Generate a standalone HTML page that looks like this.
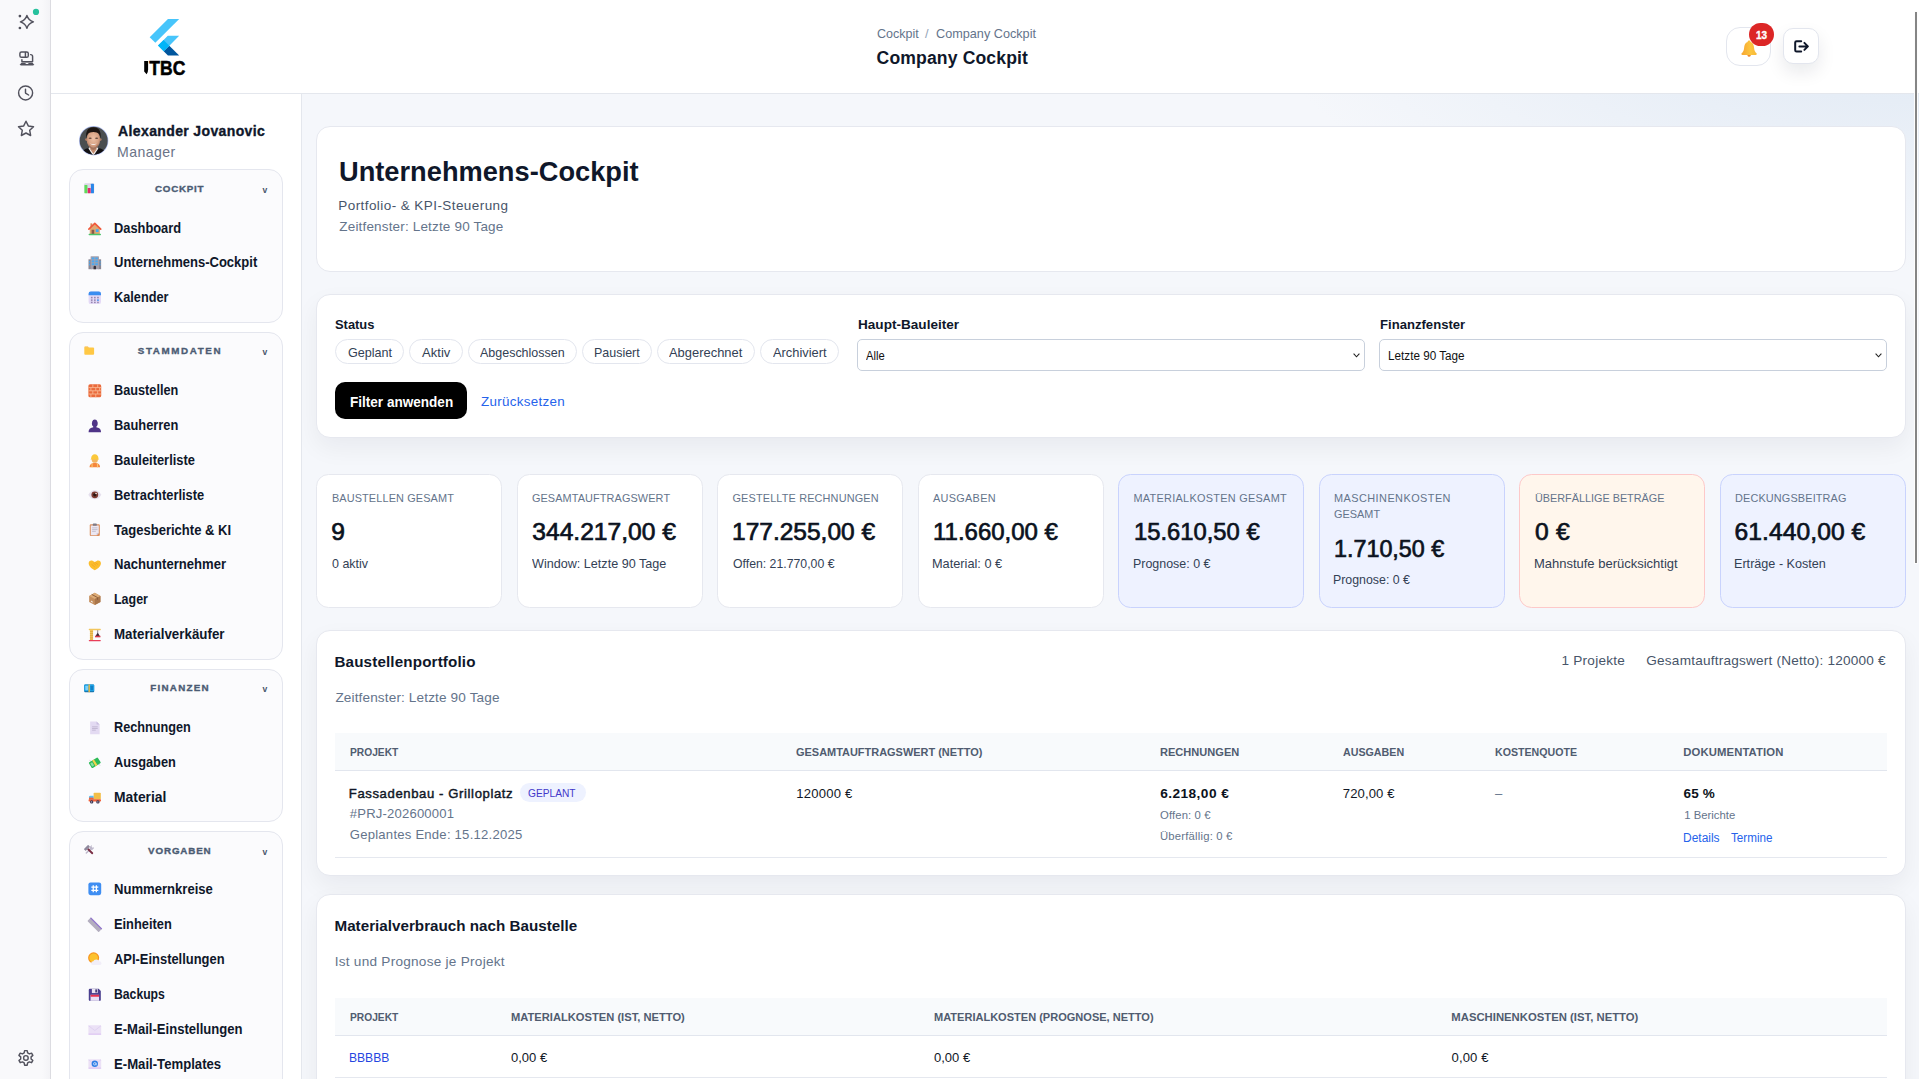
<!DOCTYPE html>
<html lang="de"><head><meta charset="utf-8"><title>Company Cockpit</title>
<style>
*{box-sizing:border-box;margin:0;padding:0}
html,body{width:1919px;height:1079px;overflow:hidden}
body{position:relative;background:#f5f7fb;font-family:"Liberation Sans",Arial,sans-serif;color:#0f172a}
.t{position:absolute;transform-origin:0 50%;white-space:nowrap;line-height:20px;height:20px;font-weight:400;text-decoration:none;display:block}
h1.t,h2.t{margin:0}
.b{position:absolute}
.rail{background:linear-gradient(90deg,#f9f9fb 0,#f9f9fb 84%,#f3f3f6 100%);border-right:1px solid #dcdce1}
.hdr{background:#fff;border-bottom:1px solid #e4e7ed}
.side{background:#fff;border-right:1px solid #e4e7ed}
.glow{background:radial-gradient(ellipse 660px 270px at 1617px -94px,#dde7f3 0,rgba(245,247,251,0) 100%)}
.grp{border:1px solid #e4e6ee;border-radius:14px;background:#fbfbfd}
.card{background:#fff;border:1px solid #e6e8ef;border-radius:14px}
.sh{box-shadow:0 10px 24px rgba(15,23,42,.055)}
.k{background:#fff;border:1px solid #e6e8ef;border-radius:12.5px}
.ki{background:#eef2ff;border-color:#c9d3fd}
.ko{background:#fff6ec;border-color:#fdc9c9}
.chip{border:1px solid #e3e6ee;border-radius:13px;background:#fff}
.sel{border:1px solid #c8d0dc;border-radius:5px;background:#fff}
.btnb{background:#000;border-radius:10px;border:0}
.th{background:#f8fafc;border-bottom:1px solid #e2e6ee}
.ln{background:#e5e8ef;height:1px}
.pill{background:#eef2ff;border-radius:10px}
.ib{background:#fff;border:1px solid #e3e6ee}
svg{position:absolute;overflow:visible}
</style></head>
<body>
<main>
<div class="b glow" style="left:302.00px;top:94.00px;width:1617.00px;height:426.00px;"></div>
<section><div class="b card" style="left:316.00px;top:126.00px;width:1590.00px;height:146.00px;"></div><h1 class="t" style="left:339.03px;top:161px;font-size:28.2px;font-weight:700;transform:scaleX(0.9660);color:#0f172a;">Unternehmens-Cockpit</h1>
<div class="t" style="left:338.30px;top:196px;font-size:13.5px;letter-spacing:0.425px;color:#475569;">Portfolio- &amp; KPI-Steuerung</div>
<div class="t" style="left:339.30px;top:217px;font-size:13.5px;letter-spacing:0.168px;color:#64748b;">Zeitfenster: Letzte 90 Tage</div></section>
<section><div class="b card sh" style="left:316.00px;top:294.00px;width:1590.00px;height:144.00px;"></div>
<label class="t" style="left:335.30px;top:315px;font-size:13.6px;font-weight:700;transform:scaleX(0.9491);color:#0f172a;">Status</label>
<span class="b chip" style="left:335px;top:339px;width:69px;height:25px;"><span class="t" style="left:11.50px;top:3px;font-size:13px;transform:scaleX(0.9691);color:#334155;">Geplant</span></span>
<span class="b chip" style="left:409px;top:339px;width:54px;height:25px;"><span class="t" style="left:12.00px;top:3px;font-size:13px;letter-spacing:0.032px;color:#334155;">Aktiv</span></span>
<span class="b chip" style="left:468px;top:339px;width:109px;height:25px;"><span class="t" style="left:11.30px;top:3px;font-size:13px;transform:scaleX(0.9598);color:#334155;">Abgeschlossen</span></span>
<span class="b chip" style="left:582px;top:339px;width:70px;height:25px;"><span class="t" style="left:10.64px;top:3px;font-size:13px;transform:scaleX(0.9580);color:#334155;">Pausiert</span></span>
<span class="b chip" style="left:657px;top:339px;width:98px;height:25px;"><span class="t" style="left:11.20px;top:3px;font-size:13px;transform:scaleX(0.9945);color:#334155;">Abgerechnet</span></span>
<span class="b chip" style="left:760px;top:339px;width:79px;height:25px;"><span class="t" style="left:11.70px;top:3px;font-size:13px;transform:scaleX(0.9878);color:#334155;">Archiviert</span></span>
<label class="t" style="left:857.60px;top:315px;font-size:13.6px;font-weight:700;transform:scaleX(0.9988);color:#0f172a;">Haupt-Bauleiter</label>
<label class="t" style="left:1379.70px;top:315px;font-size:13.6px;font-weight:700;transform:scaleX(0.9643);color:#0f172a;">Finanzfenster</label>
<div class="b sel" style="left:857px;top:339px;width:508px;height:32px;"><span class="t" style="left:8.20px;top:6px;font-size:12.3px;transform:scaleX(0.9097);color:#111;">Alle</span><svg style="left:494.70px;top:13.00px" width="7.00" height="5.00" viewBox="0 0 7 5" ><path d="M.6.7 3.5 3.8 6.4.7" fill="none" stroke="#222" stroke-width="1.1"/></svg></div>
<div class="b sel" style="left:1379px;top:339px;width:508px;height:32px;"><span class="t" style="left:8.05px;top:6px;font-size:12.3px;transform:scaleX(0.9520);color:#111;">Letzte 90 Tage</span><svg style="left:494.90px;top:13.00px" width="7.00" height="5.00" viewBox="0 0 7 5" ><path d="M.6.7 3.5 3.8 6.4.7" fill="none" stroke="#222" stroke-width="1.1"/></svg></div>
<button class="b btnb" style="left:335px;top:382px;width:132px;height:37px;"><span class="t" style="left:14.80px;top:10px;font-size:13.9px;font-weight:700;transform:scaleX(0.9757);color:#fff;">Filter anwenden</span></button>
<a href="#" class="t" style="left:481.00px;top:392px;font-size:13.4px;letter-spacing:0.297px;color:#2563eb;">Zurücksetzen</a></section>
<section><article><div class="b k" style="left:316.00px;top:474.00px;width:186.00px;height:134.00px;"></div><div class="t" style="left:331.90px;top:488px;font-size:10.9px;letter-spacing:0.133px;color:#64748b;">BAUSTELLEN GESAMT</div><div class="t" style="left:331.20px;top:522px;font-size:24.6px;color:#0b1220;-webkit-text-stroke:0.7px #0b1220;">9</div><div class="t" style="left:332.20px;top:554px;font-size:13px;transform:scaleX(0.9600);color:#334155;">0 aktiv</div></article>
<article><div class="b k" style="left:517.00px;top:474.00px;width:186.00px;height:134.00px;"></div><div class="t" style="left:531.90px;top:488px;font-size:10.9px;letter-spacing:0.107px;color:#64748b;">GESAMTAUFTRAGSWERT</div><div class="t" style="left:532.30px;top:522px;font-size:24.6px;color:#0b1220;-webkit-text-stroke:0.7px #0b1220;">344.217,00 €</div><div class="t" style="left:532.00px;top:554px;font-size:13px;transform:scaleX(0.9692);color:#334155;">Window: Letzte 90 Tage</div></article>
<article><div class="b k" style="left:717.00px;top:474.00px;width:186.00px;height:134.00px;"></div><div class="t" style="left:732.50px;top:488px;font-size:10.9px;letter-spacing:0.150px;color:#64748b;">GESTELLTE RECHNUNGEN</div><div class="t" style="left:732.20px;top:522px;font-size:24.6px;transform:scaleX(0.9963);color:#0b1220;-webkit-text-stroke:0.7px #0b1220;">177.255,00 €</div><div class="t" style="left:732.80px;top:554px;font-size:13px;transform:scaleX(0.9443);color:#334155;">Offen: 21.770,00 €</div></article>
<article><div class="b k" style="left:918.00px;top:474.00px;width:186.00px;height:134.00px;"></div><div class="t" style="left:932.90px;top:488px;font-size:10.9px;letter-spacing:0.321px;color:#64748b;">AUSGABEN</div><div class="t" style="left:933.02px;top:522px;font-size:24.6px;transform:scaleX(0.9755);color:#0b1220;-webkit-text-stroke:0.7px #0b1220;">11.660,00 €</div><div class="t" style="left:932.22px;top:554px;font-size:13px;transform:scaleX(0.9803);color:#334155;">Material: 0 €</div></article>
<article><div class="b k ki" style="left:1118.00px;top:474.00px;width:186.00px;height:134.00px;"></div><div class="t" style="left:1133.50px;top:488px;font-size:10.9px;letter-spacing:0.285px;color:#64748b;">MATERIALKOSTEN GESAMT</div><div class="t" style="left:1133.63px;top:522px;font-size:24.6px;transform:scaleX(0.9672);color:#0b1220;-webkit-text-stroke:0.7px #0b1220;">15.610,50 €</div><div class="t" style="left:1132.84px;top:554px;font-size:13px;transform:scaleX(0.9564);color:#334155;">Prognose: 0 €</div></article>
<article><div class="b k ki" style="left:1319.00px;top:474.00px;width:186.00px;height:134.00px;"></div><div class="t" style="left:1334.00px;top:488px;font-size:10.9px;letter-spacing:0.453px;color:#64748b;">MASCHINENKOSTEN</div><div class="t" style="left:1334.00px;top:504px;font-size:10.9px;letter-spacing:0.013px;color:#64748b;">GESAMT</div><div class="t" style="left:1334.25px;top:539px;font-size:24.6px;transform:scaleX(0.9484);color:#0b1220;-webkit-text-stroke:0.7px #0b1220;">1.710,50 €</div><div class="t" style="left:1333.35px;top:570px;font-size:13px;transform:scaleX(0.9503);color:#334155;">Prognose: 0 €</div></article>
<article><div class="b k ko" style="left:1519.00px;top:474.00px;width:186.00px;height:134.00px;"></div><div class="t" style="left:1534.60px;top:488px;font-size:10.9px;transform:scaleX(0.9946);color:#64748b;">ÜBERFÄLLIGE BETRÄGE</div><div class="t" style="left:1535.00px;top:522px;font-size:24.6px;letter-spacing:0.245px;color:#0b1220;-webkit-text-stroke:0.7px #0b1220;">0 €</div><div class="t" style="left:1533.90px;top:554px;font-size:13px;color:#334155;">Mahnstufe berücksichtigt</div></article>
<article><div class="b k ki" style="left:1720.00px;top:474.00px;width:186.00px;height:134.00px;"></div><div class="t" style="left:1735.00px;top:488px;font-size:10.9px;letter-spacing:0.139px;color:#64748b;">DECKUNGSBEITRAG</div><div class="t" style="left:1734.60px;top:522px;font-size:24.6px;letter-spacing:0.076px;color:#0b1220;-webkit-text-stroke:0.7px #0b1220;">61.440,00 €</div><div class="t" style="left:1734.33px;top:554px;font-size:13px;transform:scaleX(0.9708);color:#334155;">Erträge - Kosten</div></article></section>
<section><div class="b card sh" style="left:316.00px;top:630.00px;width:1590.00px;height:246.00px;"></div>
<h2 class="t" style="left:334.50px;top:652px;font-size:15.2px;font-weight:700;letter-spacing:0.144px;color:#0f172a;">Baustellenportfolio</h2>
<div class="t" style="left:335.40px;top:688px;font-size:13.6px;letter-spacing:0.131px;color:#64748b;">Zeitfenster: Letzte 90 Tage</div>
<span class="t" style="left:1561.50px;top:651px;font-size:13.6px;letter-spacing:0.228px;color:#475569;">1 Projekte</span>
<span class="t" style="left:1646.30px;top:651px;font-size:13.6px;letter-spacing:0.211px;color:#475569;">Gesamtauftragswert (Netto): 120000 €</span>
<div class="b th" style="left:335.00px;top:733.00px;width:1551.80px;height:38.00px;"></div>
<div class="t" style="left:349.70px;top:742px;font-size:11.3px;font-weight:700;transform:scaleX(0.9054);color:#505c70;">PROJEKT</div>
<div class="t" style="left:796.00px;top:742px;font-size:11.3px;font-weight:700;transform:scaleX(0.9695);color:#505c70;">GESAMTAUFTRAGSWERT (NETTO)</div>
<div class="t" style="left:1159.90px;top:742px;font-size:11.3px;font-weight:700;transform:scaleX(0.9789);color:#505c70;">RECHNUNGEN</div>
<div class="t" style="left:1342.50px;top:742px;font-size:11.3px;font-weight:700;transform:scaleX(0.9459);color:#505c70;">AUSGABEN</div>
<div class="t" style="left:1494.90px;top:742px;font-size:11.3px;font-weight:700;transform:scaleX(0.9395);color:#505c70;">KOSTENQUOTE</div>
<div class="t" style="left:1683.30px;top:742px;font-size:11.3px;font-weight:700;letter-spacing:0.111px;color:#505c70;">DOKUMENTATION</div>
<span class="b pill" style="left:520px;top:783px;width:66px;height:19px;"><span class="t" style="left:8.40px;top:0px;font-size:10.9px;transform:scaleX(0.9348);color:#4338ca;">GEPLANT</span></span>
<span class="t" style="left:348.80px;top:784px;font-size:13.1px;letter-spacing:0.610px;color:#111827;-webkit-text-stroke:0.45px #111827;">Fassadenbau - Grilloplatz</span>
<span class="t" style="left:349.80px;top:804px;font-size:13.1px;letter-spacing:0.178px;color:#64748b;">#PRJ-202600001</span>
<span class="t" style="left:349.80px;top:825px;font-size:13.1px;letter-spacing:0.227px;color:#64748b;">Geplantes Ende: 15.12.2025</span>
<span class="t" style="left:796.20px;top:784px;font-size:13.1px;letter-spacing:0.210px;color:#111827;">120000 €</span>
<span class="t" style="left:1160.20px;top:784px;font-size:13.7px;font-weight:700;letter-spacing:0.435px;color:#0b1220;">6.218,00 €</span>
<span class="t" style="left:1160.00px;top:805px;font-size:11.3px;letter-spacing:0.125px;color:#64748b;">Offen: 0 €</span>
<span class="t" style="left:1160.00px;top:826px;font-size:11.3px;letter-spacing:0.192px;color:#64748b;">Überfällig: 0 €</span>
<span class="t" style="left:1342.80px;top:784px;font-size:13.1px;letter-spacing:0.102px;color:#111827;">720,00 €</span>
<span class="t" style="left:1494.90px;top:784px;font-size:13.1px;color:#64748b;">–</span>
<span class="t" style="left:1683.50px;top:784px;font-size:13.5px;font-weight:700;letter-spacing:0.178px;color:#0b1220;">65 %</span>
<span class="t" style="left:1684.20px;top:805px;font-size:11.3px;letter-spacing:0.024px;color:#64748b;">1 Berichte</span>
<a href="#" class="t" style="left:1682.64px;top:828px;font-size:12.5px;transform:scaleX(0.9578);color:#2563eb;">Details</a>
<a href="#" class="t" style="left:1730.60px;top:828px;font-size:12.5px;transform:scaleX(0.9325);color:#2563eb;">Termine</a>
<div class="b ln" style="left:335.00px;top:857.00px;width:1551.80px;height:1.00px;"></div></section>
<section><div class="b card sh" style="left:316.00px;top:894.00px;width:1590.00px;height:206.00px;"></div>
<h2 class="t" style="left:334.50px;top:916px;font-size:15.2px;font-weight:700;letter-spacing:0.013px;color:#0f172a;">Materialverbrauch nach Baustelle</h2>
<div class="t" style="left:334.70px;top:952px;font-size:13.6px;letter-spacing:0.256px;color:#64748b;">Ist und Prognose je Projekt</div>
<div class="b th" style="left:335.00px;top:998.00px;width:1551.80px;height:38.00px;"></div>
<div class="t" style="left:349.70px;top:1007px;font-size:11.3px;font-weight:700;transform:scaleX(0.9054);color:#505c70;">PROJEKT</div>
<div class="t" style="left:511.00px;top:1007px;font-size:11.3px;font-weight:700;transform:scaleX(0.9877);color:#505c70;">MATERIALKOSTEN (IST, NETTO)</div>
<div class="t" style="left:934.00px;top:1007px;font-size:11.3px;font-weight:700;transform:scaleX(0.9763);color:#505c70;">MATERIALKOSTEN (PROGNOSE, NETTO)</div>
<div class="t" style="left:1451.30px;top:1007px;font-size:11.3px;font-weight:700;letter-spacing:0.009px;color:#505c70;">MASCHINENKOSTEN (IST, NETTO)</div>
<a href="#" class="t" style="left:349.28px;top:1048px;font-size:13.1px;transform:scaleX(0.9224);color:#2446e0;">BBBBB</a>
<span class="t" style="left:511.30px;top:1048px;font-size:13.1px;transform:scaleX(0.9940);color:#111827;">0,00 €</span>
<span class="t" style="left:934.30px;top:1048px;font-size:13.1px;transform:scaleX(0.9940);color:#111827;">0,00 €</span>
<span class="t" style="left:1451.60px;top:1048px;font-size:13.1px;letter-spacing:0.096px;color:#111827;">0,00 €</span>
<div class="b ln" style="left:335.00px;top:1077.30px;width:1551.80px;height:1.00px;"></div></section>
</main>
<header><div class="b hdr" style="left:51.00px;top:0.00px;width:1868.00px;height:94.00px;"></div>
<svg style="left:0.00px;top:0.00px" width="400.00" height="94.00" viewBox="0 0 400 94" role="img" aria-label="ITBC"><g transform="translate(149.7 19) scale(0.1155)"><polygon points="157.666,0 0.001,157.666 48.801,206.466 255.268,0.001" fill="#47c5fb"/><polygon points="156.567,145.397 72.149,229.815 121.133,279.531 169.843,230.821 255.268,145.397" fill="#47c5fb"/><polygon points="121.133,279.531 158.215,316.613 255.267,316.613 169.842,230.821" fill="#00569e"/><polygon points="71.6,230.364 120.401,181.563 169.842,230.821 121.133,279.531" fill="#00b5f8"/></g><path d="M144.2 61H148.1V69.5Q148.1 72.6 146.6 74.2L144.2 71.5Z" fill="#000"/><text x="149.3" y="74.6" font-family="Liberation Sans,Arial,sans-serif" font-weight="700" font-size="19.6" textLength="36" lengthAdjust="spacingAndGlyphs" fill="#000" stroke="#000" stroke-width=".5">TBC</text></svg>
<nav aria-label="breadcrumb"><span class="t" style="left:876.60px;top:24px;font-size:12.8px;transform:scaleX(0.9776);color:#64748b;">Cockpit</span>
<span class="t" style="left:925.00px;top:24px;font-size:12.8px;color:#94a3b8;">/</span>
<span class="t" style="left:935.60px;top:24px;font-size:12.8px;transform:scaleX(0.9898);color:#64748b;">Company Cockpit</span></nav>
<div class="t" style="left:876.60px;top:48px;font-size:17.6px;font-weight:700;letter-spacing:0.128px;color:#0f172a;">Company Cockpit</div>
<div class="b ib" style="left:1726.30px;top:27.00px;width:44.30px;height:39.00px;border-radius:14px;"></div>
<svg style="left:1740.80px;top:39.50px" width="16.20" height="16.90" viewBox="0 0 16 16.9" ><defs><linearGradient id="bg" x1="0" x2="1"><stop offset="0" stop-color="#f7a531"/><stop offset=".6" stop-color="#fcc63f"/><stop offset="1" stop-color="#f8b83a"/></linearGradient></defs><circle cx="8" cy="15.3" r="1.5" fill="#f08a2b"/><path d="M8 .6C8.9.6 9.4 1.2 9.5 2C12 2.8 12.8 5 13 8C13.2 11 14.3 12.2 15.4 13.2C16 13.8 15.7 15 14.6 15H1.4C.3 15 0 13.8.6 13.2C1.7 12.2 2.8 11 3 8C3.2 5 4 2.8 6.5 2C6.6 1.2 7.1.6 8 .6Z" fill="url(#bg)"/></svg>
<span class="b" style="left:1749px;top:23px;width:25px;height:23px;background:#dc2626;border-radius:12px;"><span class="t" style="left:7.20px;top:2px;font-size:10.6px;font-weight:700;transform:scaleX(0.9418);color:#fff;-webkit-text-stroke:0.35px #fff;">13</span></span>
<div class="b ib" style="left:1782.50px;top:28.30px;width:36.00px;height:36.00px;border-radius:10px;box-shadow:0 8px 18px rgba(15,23,42,.09);"></div>
<svg style="left:1794.00px;top:40.40px" width="15.20" height="12.80" viewBox="0 0 15.2 12.8" ><path d="M7.2 1.2H2.6Q1.2 1.2 1.2 2.6V10.2Q1.2 11.6 2.6 11.6H7.2" fill="none" stroke="#0f172a" stroke-width="2" stroke-linecap="round"/><path d="M5.4 6.4H13.6M10.4 2.9L13.9 6.4L10.4 9.9" fill="none" stroke="#0f172a" stroke-width="2" stroke-linecap="round" stroke-linejoin="round"/></svg></header>
<aside><nav><div class="b side" style="left:51.00px;top:94.00px;width:251.00px;height:985.00px;"></div>
<svg style="left:79.40px;top:125.50px" width="29.40" height="29.40" viewBox="0 0 30 30" role="img" aria-label="Alexander Jovanovic"><defs><clipPath id="av"><circle cx="15" cy="15" r="14.3"/></clipPath><radialGradient id="avf" cx=".5" cy=".45" r=".6"><stop offset="0" stop-color="#ecc0a6"/><stop offset=".6" stop-color="#d9a486"/><stop offset="1" stop-color="#a87660"/></radialGradient></defs><circle cx="15" cy="15" r="15" fill="#b6c4f6"/><g clip-path="url(#av)"><rect width="30" height="30" fill="#4a4e50"/><path d="M1 30C3 24.4 7.5 22.8 10 22.4L14.6 30L19.6 22.4C22.5 22.8 27 24.4 29 30Z" fill="#131114"/><path d="M9.6 23L11.8 20.8H17.6L19.8 23L14.7 30.5Z" fill="#f0eeec"/><path d="M11.6 19H17.8V24L14.7 28.2L11.6 24Z" fill="#c48d70"/><circle cx="7.7" cy="13.8" r="1.4" fill="#b07e66"/><circle cx="21.7" cy="13.8" r="1.4" fill="#b07e66"/><ellipse cx="14.7" cy="13.8" rx="6.9" ry="9.4" fill="url(#avf)"/><path d="M9.6 18.5Q14.7 26 19.8 18.5Q18.6 24.4 14.7 24.4T9.6 18.5Z" fill="#8f6450" opacity=".55"/><path d="M7.5 13C6.3 5.2 9.4 1.3 14.7 1.3S23.1 5.2 21.9 13C21.6 8.8 20.2 6.4 14.7 6.2C9.2 6.4 7.8 8.8 7.5 13Z" fill="#1c1512"/><path d="M11.3 17.6Q14.7 21.4 18.1 17.6Q14.7 19.4 11.3 17.6Z" fill="#f6efec"/><ellipse cx="11.4" cy="12.5" rx="1.6" ry=".8" fill="#4a332c" opacity=".8"/><ellipse cx="18" cy="12.5" rx="1.6" ry=".8" fill="#4a332c" opacity=".8"/></g></svg>
<span class="t" style="left:118.10px;top:121px;font-size:14px;font-weight:700;letter-spacing:0.368px;color:#0f172a;-webkit-text-stroke:0.35px #0f172a;">Alexander Jovanovic</span>
<span class="t" style="left:117.10px;top:142px;font-size:14.1px;letter-spacing:0.428px;color:#6b7488;">Manager</span>
<div class="b grp" style="left:69.00px;top:169.00px;width:214.00px;height:154.00px;"></div>
<svg style="left:84.00px;top:183.20px" width="10.40" height="10.40" viewBox="0 0 14 14" aria-hidden="true"><rect x=".2" y=".2" width="13.6" height="13.6" rx="1.6" fill="#dcd8e8"/><rect x=".6" y="2.6" width="4" height="11.2" rx=".8" fill="#5fdc5a"/><rect x="5" y="6.6" width="4" height="7.2" rx=".8" fill="#e6266c"/><rect x="9.4" y="1" width="4" height="12.8" rx=".8" fill="#2a86e8"/></svg>
<span class="t" style="left:155.00px;top:179px;font-size:9.8px;font-weight:700;letter-spacing:0.733px;color:#4b5b73;-webkit-text-stroke:0.35px #4b5b73;">COCKPIT</span><span class="t" style="left:262.60px;top:180px;font-size:8.6px;font-weight:700;color:#475569;">v</span>
<svg style="left:88.20px;top:221.80px" width="13.60" height="13.60" viewBox="0 0 14 14" aria-hidden="true"><rect x="2.5" y="1.4" width="1.9" height="4" fill="#d9895b"/><path d="M7 2L12.2 6.8V12.6H1.8V6.8Z" fill="#e0a872"/><path d="M.9 7.3L7 1.5L13.1 7.3" fill="none" stroke="#f0573a" stroke-width="1.7" stroke-linejoin="round" stroke-linecap="round"/><rect x="3.7" y="8" width="2.7" height="4.6" fill="#8b5a4a"/><rect x="8" y="7.4" width="2.9" height="2.9" fill="#3fa9f5"/><rect x=".6" y="12.2" width="12.8" height="1.5" rx=".7" fill="#4cc36b"/></svg><a href="#" class="t" style="left:113.75px;top:218px;font-size:14.2px;font-weight:700;transform:scaleX(0.9055);color:#0f172a;">Dashboard</a>
<svg style="left:88.20px;top:255.80px" width="13.60" height="13.60" viewBox="0 0 14 14" aria-hidden="true"><rect x=".5" y="3.4" width="3.2" height="10.2" fill="#8b8793"/><rect x="10.3" y="3.4" width="3.2" height="10.2" fill="#8b8793"/><rect x="2.7" y=".2" width="8.6" height="13.4" rx=".6" fill="#a5a1ad"/><g fill="#49a9f2"><rect x="3.9" y="1.5" width="2.6" height="2"/><rect x="7.5" y="1.5" width="2.6" height="2"/><rect x="3.9" y="4.5" width="2.6" height="2"/><rect x="7.5" y="4.5" width="2.6" height="2"/><rect x="3.9" y="7.5" width="2.6" height="1.9"/><rect x="7.5" y="7.5" width="2.6" height="1.9"/><rect x="1.1" y="5" width="1" height="1.7"/><rect x="1.1" y="8" width="1" height="1.7"/><rect x="11.9" y="5" width="1" height="1.7"/><rect x="11.9" y="8" width="1" height="1.7"/></g><path d="M5.7 13.6V11.4A1.3 1.3 0 0 1 8.3 11.4V13.6Z" fill="#37323d"/></svg><a href="#" class="t" style="left:113.75px;top:252px;font-size:14.2px;font-weight:700;transform:scaleX(0.9178);color:#0f172a;">Unternehmens-Cockpit</a>
<svg style="left:88.20px;top:290.60px" width="13.60" height="13.60" viewBox="0 0 14 14" aria-hidden="true"><rect x=".6" y=".5" width="12.8" height="13" rx="2.3" fill="#e4daf6"/><path d="M.6 4.4V2.8A2.3 2.3 0 0 1 2.9.5H11.1A2.3 2.3 0 0 1 13.4 2.8V4.4Z" fill="#3b8ef0"/><g fill="#9686b0"><rect x="3" y="6" width="1.7" height="1.6"/><rect x="6.2" y="6" width="1.7" height="1.6"/><rect x="9.4" y="6" width="1.7" height="1.6"/><rect x="3" y="8.6" width="1.7" height="1.6"/><rect x="6.2" y="8.6" width="1.7" height="1.6"/><rect x="3" y="11" width="1.7" height="1.5"/><rect x="6.2" y="11" width="1.7" height="1.5"/><rect x="9.4" y="11" width="1.7" height="1.5"/></g><rect x="9.4" y="8.6" width="1.7" height="1.6" fill="#3b8ef0"/></svg><a href="#" class="t" style="left:113.75px;top:287px;font-size:14.2px;font-weight:700;transform:scaleX(0.8988);color:#0f172a;">Kalender</a>
<div class="b grp" style="left:69.00px;top:332.00px;width:214.00px;height:328.00px;"></div>
<svg style="left:84.00px;top:345.30px" width="10.40" height="10.40" viewBox="0 0 14 14" aria-hidden="true"><path d="M.4 3.2Q.4 2 1.6 2H5.2L6.8 3.6H.4Z" fill="#f7b330"/><rect x=".4" y="3.4" width="13.2" height="9.8" rx="1.3" fill="#ffc845"/></svg>
<span class="t" style="left:137.75px;top:341px;font-size:9.8px;font-weight:700;letter-spacing:1.613px;color:#4b5b73;-webkit-text-stroke:0.35px #4b5b73;">STAMMDATEN</span><span class="t" style="left:262.60px;top:342px;font-size:8.6px;font-weight:700;color:#475569;">v</span>
<svg style="left:88.20px;top:383.70px" width="13.60" height="13.60" viewBox="0 0 14 14" aria-hidden="true"><rect x=".4" y=".3" width="13.2" height="13.4" rx="1.7" fill="#ea6a3c"/><g stroke="#f9b893" stroke-width=".9"><path d="M.4 3.7H13.6M.4 7H13.6M.4 10.3H13.6M5 .3V3.7M10 .3V3.7M3 3.7V7M8 3.7V7M12 3.7V7M5 7V10.3M10 7V10.3M3 10.3V13.7M8 10.3V13.7"/></g></svg><a href="#" class="t" style="left:113.75px;top:380px;font-size:14.2px;font-weight:700;transform:scaleX(0.8969);color:#0f172a;">Baustellen</a>
<svg style="left:88.20px;top:418.70px" width="13.60" height="13.60" viewBox="0 0 14 14" aria-hidden="true"><path d="M4.5 2.6Q4.7.5 7 .5T9.5 2.6L10 3.5H4Z" fill="#4f3488"/><circle cx="7" cy="4.9" r="3" fill="#4f3488"/><path d="M.6 13.6C.6 9.6 3.8 8.6 7 8.6S13.4 9.6 13.4 13.6Z" fill="#4f3488"/><rect x="5.4" y="7" width="3.2" height="2.6" fill="#4f3488"/></svg><a href="#" class="t" style="left:113.75px;top:415px;font-size:14.2px;font-weight:700;transform:scaleX(0.9069);color:#0f172a;">Bauherren</a>
<svg style="left:88.20px;top:453.70px" width="13.60" height="13.60" viewBox="0 0 14 14" aria-hidden="true"><path d="M1.6 13.7C1.6 10.4 4 9.2 7 9.2S12.4 10.4 12.4 13.7Z" fill="#f5853d"/><path d="M4.2 9.7V13.7M9.8 9.7V13.7" stroke="#fbc46a" stroke-width="1.2"/><circle cx="7" cy="5.9" r="3.2" fill="#f3b562"/><path d="M3.2 4.8C3.2 1.9 4.9.3 7 .3S10.8 1.9 10.8 4.8L11.5 5.6H2.5Z" fill="#fbc83a"/></svg><a href="#" class="t" style="left:113.75px;top:450px;font-size:14.2px;font-weight:700;transform:scaleX(0.9080);color:#0f172a;">Bauleiterliste</a>
<svg style="left:88.20px;top:488.45px" width="13.60" height="13.60" viewBox="0 0 14 14" aria-hidden="true"><path d="M.3 7Q3 2.3 7 2.3T13.7 7Q11 11.7 7 11.7T.3 7Z" fill="#e5dfed"/><circle cx="7" cy="7" r="3.5" fill="#7d3b33"/><circle cx="7" cy="7" r="1.7" fill="#2a1411"/><circle cx="8.3" cy="5.7" r=".8" fill="#fff"/></svg><a href="#" class="t" style="left:113.75px;top:485px;font-size:14.2px;font-weight:700;transform:scaleX(0.9074);color:#0f172a;">Betrachterliste</a>
<svg style="left:88.20px;top:523.45px" width="13.60" height="13.60" viewBox="0 0 14 14" aria-hidden="true"><rect x="1.8" y="1.4" width="10.4" height="12" rx="1.1" fill="#db9060"/><path d="M2.9 2.7H11.1V10.4L8.9 12.5H2.9Z" fill="#ece8f3"/><path d="M11.1 10.4H8.9V12.5Z" fill="#cfc8dc"/><rect x="5" y=".6" width="4" height="2.2" rx=".6" fill="#7d7a86"/><path d="M4.2 5H9.8M4.2 6.8H9.8M4.2 8.6H8" stroke="#b8b2c4" stroke-width=".8"/></svg><a href="#" class="t" style="left:113.75px;top:520px;font-size:14.2px;font-weight:700;transform:scaleX(0.9189);color:#0f172a;">Tagesberichte &amp; KI</a>
<svg style="left:88.20px;top:557.70px" width="13.60" height="13.60" viewBox="0 0 14 14" aria-hidden="true"><path d="M7 12.6C3.2 10.8.5 8.2.7 5.2C.9 2.8 3.4 2.1 5 3L7 4.1L9 3C10.6 2.1 13.1 2.8 13.3 5.2C13.5 8.2 10.8 10.8 7 12.6Z" fill="#fbbd2d"/><path d="M3.6 6.4L7 9.2M5.4 5.2L8.6 7.8M7.4 4.6L10.4 6.8" stroke="#f0a41e" stroke-width=".8" fill="none"/></svg><a href="#" class="t" style="left:113.75px;top:554px;font-size:14.2px;font-weight:700;transform:scaleX(0.9230);color:#0f172a;">Nachunternehmer</a>
<svg style="left:88.20px;top:592.45px" width="13.60" height="13.60" viewBox="0 0 14 14" aria-hidden="true"><path d="M7 .8L12.8 4V10.2L7 13.4L1.2 10.2V4Z" fill="#c48d5c"/><path d="M7 .8L12.8 4L7 7.2L1.2 4Z" fill="#dcab76"/><path d="M7 7.2L12.8 4V10.2L7 13.4Z" fill="#a9764b"/><path d="M3.9 2.5L9.8 5.7V8" stroke="#8a5c3a" stroke-width="1" fill="none"/><rect x="3" y="9.2" width="1.8" height="1.2" fill="#f3ece4" transform="skewY(28) translate(0 -2)"/></svg><a href="#" class="t" style="left:113.75px;top:589px;font-size:14.2px;font-weight:700;transform:scaleX(0.8782);color:#0f172a;">Lager</a>
<svg style="left:88.20px;top:627.50px" width="13.60" height="13.60" viewBox="0 0 14 14" aria-hidden="true"><rect x="2" y="1.6" width="3.2" height="11" fill="#f2c65e"/><path d="M2 3.6H5.2M2 5.6H5.2M2 7.6H5.2M2 9.6H5.2M2 11.4H5.2" stroke="#d9a236" stroke-width=".7"/><rect x=".8" y=".8" width="12.4" height="1.5" rx=".5" fill="#f2c65e"/><path d="M10 2.3V5" stroke="#5a4a55" stroke-width=".7"/><path d="M10 4.6L12.6 9H7.4Z" fill="#3b2a36"/><rect x="7.2" y="8" width="5.6" height="1.6" fill="#d93b4c"/><rect x=".8" y="12.4" width="12.4" height="1.2" rx=".5" fill="#e83e5a"/></svg><a href="#" class="t" style="left:113.75px;top:624px;font-size:14.2px;font-weight:700;transform:scaleX(0.9408);color:#0f172a;">Materialverkäufer</a>
<div class="b grp" style="left:69.00px;top:669.00px;width:214.00px;height:153.00px;"></div>
<svg style="left:84.00px;top:683.40px" width="10.40" height="10.40" viewBox="0 0 14 14" aria-hidden="true"><rect x=".3" y="2" width="13.4" height="10.4" rx="1.2" fill="#14689e"/><rect x=".3" y="2" width="13.4" height="9.2" rx="1.2" fill="#1fa6ea"/><rect x="1.8" y="3.6" width="3.6" height="6" rx=".8" fill="#7fd0f7"/><rect x="8.8" y="3.6" width="3.4" height="6" rx=".8" fill="#1480c4"/><rect x="6" y="2" width="1.9" height="10.4" fill="#f7b731"/></svg>
<span class="t" style="left:150.25px;top:678px;font-size:9.8px;font-weight:700;letter-spacing:1.257px;color:#4b5b73;-webkit-text-stroke:0.35px #4b5b73;">FINANZEN</span><span class="t" style="left:262.60px;top:679px;font-size:8.6px;font-weight:700;color:#475569;">v</span>
<svg style="left:88.20px;top:720.60px" width="13.60" height="13.60" viewBox="0 0 14 14" aria-hidden="true"><path d="M2.2.4H8.8L12 3.6V13.6H2.2Z" fill="#e3daf2"/><path d="M8.8.4L12 3.6H8.8Z" fill="#c9bde0"/><path d="M4.2 6H10M4.2 7.7H10M4.2 9.4H8" stroke="#b9aecb" stroke-width=".8"/></svg><a href="#" class="t" style="left:113.75px;top:717px;font-size:14.2px;font-weight:700;transform:scaleX(0.8944);color:#0f172a;">Rechnungen</a>
<svg style="left:88.20px;top:755.60px" width="13.60" height="13.60" viewBox="0 0 14 14" aria-hidden="true"><path d="M.8 3.6L4.8 5.6L3.2 7.2ZM13.2 10.4L9.2 8.4L10.8 6.8Z" fill="#d9d5df"/><g transform="rotate(-32 7 7)"><rect x="1.6" y="3.6" width="10.8" height="6.8" rx=".9" fill="#2dbb59"/><rect x="5.9" y="3.6" width="2.2" height="6.8" fill="#f4d24a"/><rect x="2.6" y="5" width="2.4" height="4" rx=".5" fill="#8be0a4"/></g></svg><a href="#" class="t" style="left:113.75px;top:752px;font-size:14.2px;font-weight:700;transform:scaleX(0.9019);color:#0f172a;">Ausgaben</a>
<svg style="left:88.20px;top:790.60px" width="13.60" height="13.60" viewBox="0 0 14 14" aria-hidden="true"><rect x="5.8" y="1.8" width="7.4" height="7" rx=".8" fill="#f2be48"/><path d="M1 9V6.2Q1 4.8 2.4 4.8H5.8V9Z" fill="#5bc0f5"/><rect x=".6" y="8.4" width="12.8" height="2.4" rx=".8" fill="#f0603a"/><path d="M1 6.8H5.8V8.6H1Z" fill="#f0603a"/><circle cx="3.8" cy="11.2" r="1.7" fill="#2e2a4a"/><circle cx="10.2" cy="11.2" r="1.7" fill="#2e2a4a"/><circle cx="3.8" cy="11.2" r=".6" fill="#e8e4f0"/><circle cx="10.2" cy="11.2" r=".6" fill="#e8e4f0"/></svg><a href="#" class="t" style="left:113.75px;top:787px;font-size:14.2px;font-weight:700;transform:scaleX(0.9777);color:#0f172a;">Material</a>
<div class="b grp" style="left:69.00px;top:831.00px;width:214.00px;height:269.00px;"></div>
<svg style="left:84.00px;top:845.30px" width="10.40" height="10.40" viewBox="0 0 14 14" aria-hidden="true"><g transform="rotate(45 7 7)"><rect x="6" y="1.2" width="2" height="12.2" rx=".9" fill="#bdb7ca"/><path d="M4.4.2H5.9V2.2H8.1V.2H9.6V3.4Q9.6 4.6 8.4 4.6H5.6Q4.4 4.6 4.4 3.4Z" fill="#bdb7ca"/></g><g transform="rotate(-45 7 7)"><rect x="5.7" y="4" width="2.6" height="10" rx="1.1" fill="#7a2f45"/><rect x="2.8" y=".8" width="8.4" height="3.6" rx=".9" fill="#8e889c"/></g></svg>
<span class="t" style="left:148.10px;top:841px;font-size:9.8px;font-weight:700;letter-spacing:0.852px;color:#4b5b73;-webkit-text-stroke:0.35px #4b5b73;">VORGABEN</span><span class="t" style="left:262.60px;top:842px;font-size:8.6px;font-weight:700;color:#475569;">v</span>
<svg style="left:88.20px;top:882.45px" width="13.60" height="13.60" viewBox="0 0 14 14" aria-hidden="true"><rect x=".4" y=".4" width="13.2" height="13.2" rx="2.2" fill="#3f8ef2"/><path d="M5.4 3.4V10.6M8.6 3.4V10.6M3.4 5.4H10.6M3.4 8.6H10.6" stroke="#fff" stroke-width="1.3"/></svg><a href="#" class="t" style="left:113.75px;top:879px;font-size:14.2px;font-weight:700;transform:scaleX(0.9222);color:#0f172a;">Nummernkreise</a>
<svg style="left:88.20px;top:917.50px" width="13.60" height="13.60" viewBox="0 0 14 14" aria-hidden="true"><g transform="rotate(45 7 7)"><rect x="-1.2" y="4.4" width="16.4" height="5.2" rx=".7" fill="#b3aebf"/><rect x="-1.2" y="4.4" width="16.4" height="1.1" fill="#8f6fd0"/></g></svg><a href="#" class="t" style="left:113.75px;top:914px;font-size:14.2px;font-weight:700;transform:scaleX(0.9045);color:#0f172a;">Einheiten</a>
<svg style="left:88.20px;top:952.40px" width="13.60" height="13.60" viewBox="0 0 14 14" aria-hidden="true"><circle cx="5.8" cy="6" r="5.7" fill="#f7941e"/><circle cx="5.8" cy="6" r="4.5" fill="#fcc22e"/><path d="M5.2 13.4Q3.2 13.4 3.2 11.5T5.4 9.6Q6 7.6 8.6 7.6T11.6 9.6Q13.9 9.6 13.9 11.5T12 13.4Z" fill="#f1eef8"/></svg><a href="#" class="t" style="left:113.75px;top:949px;font-size:14.2px;font-weight:700;transform:scaleX(0.9108);color:#0f172a;">API-Einstellungen</a>
<svg style="left:88.20px;top:987.50px" width="13.60" height="13.60" viewBox="0 0 14 14" aria-hidden="true"><path d="M.8 2Q.8.8 2 .8H11L13.2 3V12Q13.2 13.2 12 13.2H2Q.8 13.2.8 12Z" fill="#4a3f8f"/><rect x="4" y=".8" width="6" height="4.4" fill="#e9e4f2"/><rect x="7.6" y="1.4" width="1.5" height="3.2" fill="#2c2560"/><rect x="2.6" y="7" width="8.8" height="6.2" fill="#e8e1f5"/><rect x="2.6" y="7" width="8.8" height="2" fill="#e8334f"/></svg><a href="#" class="t" style="left:113.75px;top:984px;font-size:14.2px;font-weight:700;transform:scaleX(0.8599);color:#0f172a;">Backups</a>
<svg style="left:88.20px;top:1022.50px" width="13.60" height="13.60" viewBox="0 0 14 14" aria-hidden="true"><rect x=".4" y="2.4" width="13.2" height="9.4" rx="1" fill="#ebe1f6"/><path d="M.6 2.8L7 7.8L13.4 2.8" fill="none" stroke="#dccdf0" stroke-width=".8"/><rect x=".4" y="11" width="13.2" height=".9" rx=".4" fill="#d1b0ef"/></svg><a href="#" class="t" style="left:113.75px;top:1019px;font-size:14.2px;font-weight:700;transform:scaleX(0.9215);color:#0f172a;">E-Mail-Einstellungen</a>
<svg style="left:88.20px;top:1057.40px" width="13.60" height="13.60" viewBox="0 0 14 14" aria-hidden="true"><rect x=".4" y="2.4" width="13.2" height="9.4" rx="1" fill="#ebe1f6"/><path d="M.6 2.8L7 7.8L13.4 2.8" fill="none" stroke="#dccdf0" stroke-width=".8"/><rect x=".4" y="11" width="13.2" height=".9" rx=".4" fill="#d1b0ef"/><circle cx="7" cy="7" r="3.3" fill="#2f7fe6"/><circle cx="7" cy="7" r="1.3" fill="none" stroke="#dfeafc" stroke-width=".8"/><path d="M8.3 6V7.6Q8.3 8.4 9 8.2" fill="none" stroke="#dfeafc" stroke-width=".7"/></svg><a href="#" class="t" style="left:113.75px;top:1054px;font-size:14.2px;font-weight:700;transform:scaleX(0.9267);color:#0f172a;">E-Mail-Templates</a></nav></aside>
<div><div class="b rail" style="left:0.00px;top:0.00px;width:51.00px;height:1079.00px;"></div>
<svg style="left:0.00px;top:0.00px" width="51.00" height="1079.00" viewBox="0 0 51 1079" aria-hidden="true"><path d="M26.9 15.5Q28.4 20.4 33.4 21.9Q28.4 23.4 26.9 28.3Q25.4 23.4 20.4 21.9Q25.4 20.4 26.9 15.5Z" fill="none" stroke="#52525d" stroke-width="1.45" stroke-linecap="round" stroke-linejoin="round" stroke-width="1.6"/><circle cx="19.9" cy="16.1" r="1.35" fill="#52525d"/><circle cx="19.9" cy="28" r="1.35" fill="#52525d"/><circle cx="36" cy="11.9" r="3.1" fill="#27c19d"/><rect x="19.9" y="51.9" width="8.4" height="5.4" rx="1.6" fill="none" stroke="#52525d" stroke-width="1.45" stroke-linecap="round" stroke-linejoin="round"/><path d="M25.4 52.4V56.8" fill="none" stroke="#52525d" stroke-width="1.45" stroke-linecap="round" stroke-linejoin="round"/><path d="M30.6 54.6Q32.6 54.6 32.6 56.6V61.6H21.9V59.6" fill="none" stroke="#52525d" stroke-width="1.45" stroke-linecap="round" stroke-linejoin="round"/><path d="M21.6 62.5H32.4L33.8 64.2Q34.1 65.6 32.8 65.6H21.2Q19.9 65.6 20.2 64.2Z" fill="#52525d"/><rect x="25.5" y="62.9" width="3" height="1.2" rx=".6" fill="#f7f7fa"/><circle cx="25.6" cy="92.9" r="7" fill="none" stroke="#52525d" stroke-width="1.45" stroke-linecap="round" stroke-linejoin="round" stroke-width="1.4"/><path d="M25.5 89.2V93.1L28.6 95" fill="none" stroke="#52525d" stroke-width="1.45" stroke-linecap="round" stroke-linejoin="round" stroke-width="1.4"/><path d="M26.00 121.20 L28.29 125.94 L33.51 126.66 L29.71 130.31 L30.64 135.49 L26.00 133.00 L21.36 135.49 L22.29 130.31 L18.49 126.66 L23.71 125.94Z" fill="none" stroke="#52525d" stroke-width="1.45" stroke-linecap="round" stroke-linejoin="round" stroke-width="1.5"/><path d="M24.17 1052.89 L24.62 1050.61 L27.18 1050.61 L27.63 1052.89 L29.38 1053.90 L31.57 1053.14 L32.85 1055.37 L31.10 1056.89 L31.10 1058.91 L32.85 1060.43 L31.57 1062.66 L29.38 1061.90 L27.63 1062.91 L27.18 1065.19 L24.62 1065.19 L24.17 1062.91 L22.42 1061.90 L20.23 1062.66 L18.95 1060.43 L20.70 1058.91 L20.70 1056.89 L18.95 1055.37 L20.23 1053.14 L22.42 1053.90Z" fill="none" stroke="#52525d" stroke-width="1.45" stroke-linecap="round" stroke-linejoin="round" stroke-width="1.5"/><circle cx="25.9" cy="1057.9" r="2.3" fill="none" stroke="#52525d" stroke-width="1.45" stroke-linecap="round" stroke-linejoin="round" stroke-width="1.4"/></svg></div>
<div class="b" style="left:1914.00px;top:11.00px;width:4.00px;height:553.00px;background:#fdfdfd;"></div>
<div class="b" style="left:1915.00px;top:12.00px;width:2.00px;height:551.00px;background:#858585;"></div>
</body></html>
